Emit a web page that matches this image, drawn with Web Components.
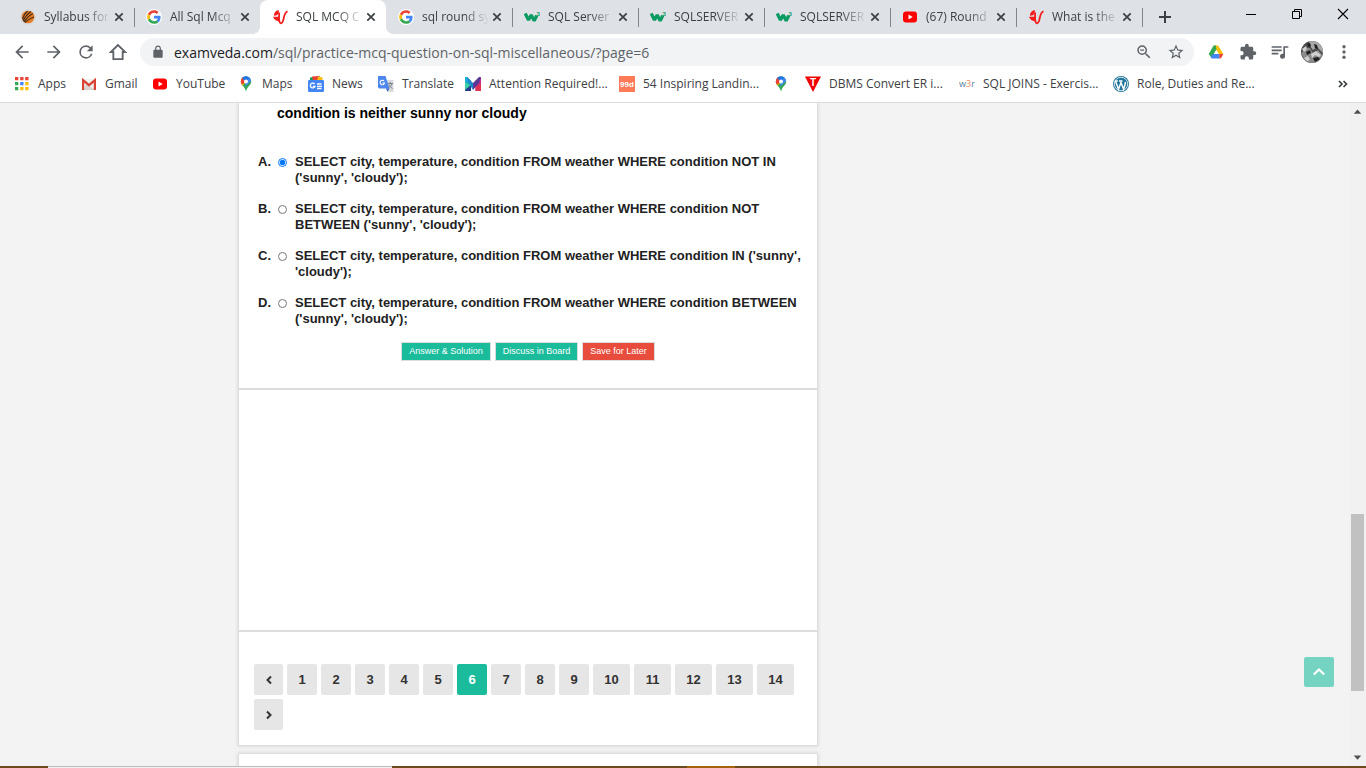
<!DOCTYPE html>
<html lang="en">
<head>
<meta charset="utf-8">
<title>SQL MCQ Questions</title>
<style>
html, body { height: 100%; margin: 0; }
body { overflow: hidden; font-family: "Open Sans", "Noto Sans", sans-serif; font-size: 12px; color: #3c4043; }
</style>
</head>
<body>
<browser-window></browser-window>
<script>
const icons = {
  back: ['0 0 24 24', '<path fill="currentColor" d="M20 11H7.83l5.59-5.59L12 4l-8 8 8 8 1.41-1.41L7.83 13H20z"/>'],
  forward: ['0 0 24 24', '<path fill="currentColor" d="M12 4l-1.41 1.41L16.17 11H4v2h12.17l-5.58 5.59L12 20l8-8z"/>'],
  reload: ['0 0 24 24', '<path fill="currentColor" d="M17.65 6.35A7.96 7.96 0 0 0 12 4a8 8 0 1 0 7.73 10h-2.08A6 6 0 1 1 12 6c1.66 0 3.14.69 4.22 1.78L13 11h7V4z"/>'],
  home: ['0 0 24 24', '<path fill="none" stroke="currentColor" stroke-width="2.2" d="M12 3.6 3.4 12H6.4v8.6h11.2V12h3z"/>'],
  lock: ['0 0 24 24', '<path fill="currentColor" d="M18 8h-1V6c0-2.76-2.24-5-5-5S7 3.24 7 6v2H6c-1.1 0-2 .9-2 2v10c0 1.1.9 2 2 2h12c1.1 0 2-.9 2-2V10c0-1.1-.9-2-2-2zM9 6c0-1.66 1.34-3 3-3s3 1.34 3 3v2H9z"/>'],
  zoom: ['0 0 24 24', '<path fill="currentColor" d="M15.5 14h-.79l-.28-.27A6.47 6.47 0 0 0 16 9.5 6.5 6.5 0 1 0 9.5 16c1.61 0 3.09-.59 4.23-1.57l.27.28v.79l5 4.99L20.49 19zm-6 0C7.01 14 5 11.99 5 9.5S7.01 5 9.5 5 14 7.01 14 9.5 11.99 14 9.5 14zM7 8.8h5v1.4H7z"/>'],
  star: ['0 0 24 24', '<path fill="currentColor" d="M22 9.24l-7.19-.62L12 2 9.19 8.63 2 9.24l5.46 4.73L5.82 21 12 17.27 18.18 21l-1.63-7.03zM12 15.4l-3.76 2.27 1-4.28-3.32-2.88 4.38-.38L12 6.1l1.71 4.04 4.38.38-3.32 2.88 1 4.28z"/>'],
  puzzle: ['0 0 24 24', '<path fill="currentColor" d="M20.5 11H19V7c0-1.1-.9-2-2-2h-4V3.5a2.5 2.5 0 0 0-5 0V5H4c-1.1 0-2 .9-2 2v3.8h1.5a2.7 2.7 0 0 1 0 5.4H2V20c0 1.1.9 2 2 2h3.8v-1.5a2.7 2.7 0 0 1 5.4 0V22H17c1.1 0 2-.9 2-2v-4h1.5a2.5 2.5 0 0 0 0-5z"/>'],
  queue: ['0 0 24 24', '<path fill="currentColor" d="M14 5H2v2h12zM14 9H2v2h12zM2 15h8v-2H2zM16 5v9.18c-.31-.11-.65-.18-1-.18a3 3 0 1 0 3 3V7h4V5z"/>'],
  dots: ['0 0 24 24', '<g fill="currentColor"><circle cx="12" cy="5" r="2.2"/><circle cx="12" cy="12" r="2.2"/><circle cx="12" cy="19" r="2.2"/></g>'],
  more: ['0 0 16 16', '<path fill="none" stroke="currentColor" stroke-width="1.7" d="M4 5l3 3-3 3M8.500 5l3 3-3 3"/>'],
  close: ['0 0 16 16', '<path stroke="currentColor" stroke-width="1.700" d="M4.300 4.300l7.400 7.400M11.700 4.300l-7.400 7.400"/>'],
  plus: ['0 0 16 16', '<path stroke="currentColor" stroke-width="2" d="M8 2v12M2 8h12"/>'],
  minimise: ['0 0 16 16', '<path stroke="currentColor" d="M3 8.500h10"/>'],
  restore: ['0 0 16 16', '<path fill="none" stroke="currentColor" d="M3.500 5.500h7v7h-7zM5.500 5.500v-2h7v7h-2"/>'],
  quit: ['0 0 16 16', '<path stroke="currentColor" stroke-width="1.100" d="M3 3l10 10M13 3L3 13"/>'],
  left: ['0 0 16 16', '<path fill="none" stroke="currentColor" stroke-width="2" d="M10 4.500L6.500 8l3.500 3.500"/>'],
  right: ['0 0 16 16', '<path fill="none" stroke="currentColor" stroke-width="2" d="M6 4.500L9.500 8 6 11.500"/>'],
  up: ['0 0 16 16', '<path fill="none" stroke="currentColor" stroke-width="2.200" d="M2.800 10.500L8 5.500l5.200 5"/>'],
  arrowUp: ['0 0 16 16', '<path fill="currentColor" d="M4.500 10L8 6l3.500 4z"/>'],
  arrowDown: ['0 0 16 16', '<path fill="currentColor" d="M4.500 6L8 10l3.500-4z"/>'],
  syllabus: ['0 0 16 16', '<circle cx="8" cy="8" r="7.700" fill="#d9d9d9"/><circle cx="8" cy="8" r="6.300" fill="#e87a22"/><g fill="none" stroke="#3d2a1c" stroke-width="1.100"><path d="M3 12C5 8 7 5 11 2.500M4 13C7 9 9 6 13 4.500M5 13.500C8 11 10 9 14 8M2.500 10C3.500 7 5 4 7.500 2"/></g>'],
  google: ['-4 -4 56 56', '<circle cx="24" cy="24" r="28" fill="#fff"/><path fill="#EA4335" d="M24 9.500c3.540 0 6.710 1.220 9.210 3.600l6.850-6.850C35.900 2.380 30.470 0 24 0 14.620 0 6.510 5.380 2.560 13.220l7.980 6.190C12.430 13.720 17.740 9.500 24 9.500z"/><path fill="#4285F4" d="M46.980 24.550c0-1.570-.15-3.090-.38-4.550H24v9.020h12.940c-.58 2.960-2.260 5.480-4.780 7.180l7.730 6c4.510-4.180 7.090-10.360 7.090-17.650z"/><path fill="#FBBC05" d="M10.530 28.590c-.48-1.450-.76-2.990-.76-4.590s.27-3.140.76-4.590l-7.980-6.190C.92 16.460 0 20.120 0 24s.92 7.540 2.560 10.780z"/><path fill="#34A853" d="M24 48c6.480 0 11.930-2.130 15.890-5.810l-7.730-6c-2.150 1.450-4.920 2.300-8.160 2.300-6.260 0-11.570-4.220-13.470-9.910l-7.980 6.190C6.510 42.620 14.620 48 24 48z"/>'],
  veda: ['0 0 16 16', '<path fill="#f51c1c" d="M6.800 1C3.500 1.500 2 4 1.900 6.800L5 6.200 6.800 4zM1 7.800h6v4.400C4 12 2 10.500 1 7.800z"/><path fill="none" stroke="#f51c1c" stroke-width="1.800" d="M7.200 3.500c-.2 4-.4 7 .2 9 .8 2.600 2.600 2.300 3.600-.5 1.200-3.500.8-8 4.500-9.800"/>'],
  schools: ['0 0 16 16', '<path fill="none" stroke="#0a9b63" stroke-width="3.300" stroke-linejoin="bevel" d="M1.200 4.500L4.500 11 7.200 6l3 5.700 2.600-5.200"/><text x="12.500" y="6.500" font-size="6" font-weight="700" font-family="Liberation Sans, sans-serif" fill="#0a9b63">3</text>'],
  youtube: ['0 0 16 16', '<rect x="1" y="2.500" width="14" height="11" rx="3" fill="#f00"/><path fill="#fff" d="M6.500 5.500v5L10.700 8z"/>'],
  apps: ['0 0 16 16', '<path fill="#ea4335" d="M1 1h3.300v3.300H1zM6.200 1h3.300v3.300H6.200zM11.200 1h3.300v3.300h-3.300z"/><path fill="#34a853" d="M1 6h3.300v3.300H1zM1 11h3.300v3.300H1z"/><path fill="#4285f4" d="M6.200 6h3.300v3.300H6.200z"/><path fill="#fbbc04" d="M11.200 6h3.300v3.300h-3.300zM6.200 11h3.300v3.300H6.200zM11.200 11h3.300v3.300h-3.300z"/>'],
  gmail: ['0 0 16 16', '<path fill="#f1f1f1" d="M1 3h14v11H1z"/><path fill="#d9d5d1" d="M5 8l3 2 7 4H3z"/><path fill="none" stroke="#d94334" stroke-width="2.200" d="M2.100 14V4.200L8 9.200l5.900-5V14"/>'],
  maps: ['0 0 16 16', '<clipPath id="pin"><path d="M8 .3a5.200 5.200 0 0 0-5.200 5.200c0 4 4 4.700 5.200 10.200 1.200-5.500 5.200-6.200 5.200-10.200A5.200 5.200 0 0 0 8 .3z"/></clipPath><g clip-path="url(#pin)"><path fill="#34a853" d="M0 0h16v16H0z"/><path fill="#fbbc04" d="M8 5.500L2 13V6l4-2z"/><path fill="#ea4335" d="M0 0h6l2 5.500L3.500 9 0 6z"/><path fill="#1a73e8" d="M4 2l4 3.500L13 0H4z"/><path fill="#4285f4" d="M8 5.500L12 1l2 3-7 7z"/></g><circle cx="8" cy="5.500" r="2" fill="#fff"/>'],
  news: ['0 0 16 16', '<path fill="#0c9d58" d="M2 1.500L12 .5v5H2z"/><path fill="#ea4335" d="M4 .5L11 0l1 5H5z"/><path fill="#fbbc04" d="M10 .5l4.500 1v4H9z"/><rect y="4" width="16" height="12" rx="1.200" fill="#4285f4"/><path fill="none" stroke="#fff" stroke-width="1.300" d="M6.600 8A2.400 2.400 0 1 0 7 10.300H4.800M9 8h4.500M9 10.300h5M9 12.500h4.500"/>'],
  translate: ['0 0 16 16', '<path fill="#d8dade" d="M6 4h9.500v12H9z"/><path fill="#4d87ee" d="M0 0h7.500l4 12.500H1.200L0 11.500z"/><path fill="#2b62c9" d="M8 12.500h3.500L9.500 15.500z"/><path fill="none" stroke="#fff" stroke-width="1.100" d="M6 5A2.200 2.200 0 1 0 6.500 7H4.400"/><path fill="none" stroke="#7b8490" d="M9.500 7.500H15M12.300 6v1.500M14 7.500c-.5 2-2 3.500-3.500 4.500M11 8.500c.7 1.800 2 3 3.500 4"/>'],
  attention: ['0 0 16 16', '<path fill="#273a8f" d="M0 1h2l4 4v10H0z"/><path fill="#18b3d8" d="M0 1h2l4 4v4L0 6z"/><path fill="#35d0a5" d="M0 6l6 3-6 5z"/><path fill="#1e88c9" d="M2 1l6 6v7L3 6z"/><path fill="#c02c91" d="M16 1v14h-5.500V5z"/><path fill="#583795" d="M14 1h2l-2 6-6 7V7z"/><path fill="#dd3354" d="M10.500 11L16 7v8h-5.500z"/>'],
  inspire: ['0 0 16 16', '<path fill="#ff7a59" d="M0 0h16v16H0z"/><text x="1" y="11" font-size="8" font-weight="700" font-family="Liberation Sans, sans-serif" fill="#fff">99d</text>'],
  dbms: ['0 0 16 16', '<path fill="#f00000" d="M0 .5h16L8 16z"/><text x="8" y="10" text-anchor="middle" font-size="10" font-weight="700" font-family="Liberation Sans, sans-serif" fill="#fff">T</text>'],
  w3r: ['0 0 16 16', '<text y="11" font-size="9" font-family="Open Sans, sans-serif" fill="#55819f">w<tspan fill="#e88b5c">3</tspan>r</text>'],
  wordpress: ['0 0 16 16', '<circle cx="8" cy="8" r="8" fill="#21759b"/><circle cx="8" cy="8" r="6.700" fill="none" stroke="#fff" stroke-width=".8"/><path fill="none" stroke="#fff" stroke-width="1.500" d="M2.500 5.200l3 8L8 6.500l2.600 6.700c1-3 2.200-5.200 1.600-7.200M1.800 5h3M6 5h3.500"/>'],
  drive: ['0 0 16 16', '<path fill="#fbbc04" d="M5.800 1.500h4.300L15.300 10h-4.500z"/><path fill="#34a853" d="M5.600 1.500h2.300L8.400 5.500 3.600 14 .7 10z"/><path fill="#fff" d="M8.200 6.200l2.400 4.200H5.800z"/><path fill="#4285f4" d="M4.600 10h7v4.500h-8L2.800 13z"/><path fill="#ea4335" d="M11.400 10h3.900l-2.300 4.300-1.600.2z"/>'],
  avatar: ['0 0 22 22', '<clipPath id="av"><circle cx="11" cy="11" r="11"/></clipPath><g clip-path="url(#av)"><path fill="#4b4b4b" d="M0 0h22v22H0z"/><path fill="#a8a8a8" d="M8 0l8-1 6 8v5l-6-6-4 3-3-4z"/><path fill="#8a8a8a" d="M0 12l8-6 4 6 5-3 5 6-8 7H5z"/><path fill="#d0d0d0" d="M10 13l5-3 5 4-2 2-4-2-3 3zM1 8l4-3 1 3-3 3zM3 17l4-2 2 4-3 1z"/><path fill="#1f1f1f" d="M13 3l3 1 1 4-3-1zM5 11l4-2 1 3-4 2zM12 17l5-1 2 2-5 3zM6 3l3-1 1 3-2 2z"/></g>'],
};

/* Base class: stamps the subclass's template into an open shadow root. */
class Part extends HTMLElement {
  connectedCallback() {
    if (this.shadowRoot) return;
    const t = document.createElement('template');
    t.innerHTML = `<style>*{box-sizing:border-box}button{font:inherit;color:inherit;background:none;border:0;padding:0;margin:0}a{color:inherit;text-decoration:none}${this.css()}</style>${this.html()}`;
    this.attachShadow({ mode: 'open' }).append(t.content.cloneNode(true));
  }
}
const define = (name, css, html) => customElements.define(name, class extends Part {
  css() { return css; }
  html() { return html(this); }
});
const ic = (name, size = 16) => `<ui-icon name="${name}" style="--size:${size}px"></ui-icon>`;

define('ui-icon', ':host{display:block;flex:none;width:var(--size,16px);height:var(--size,16px)}svg{display:block;width:100%;height:100%}',
  el => { const [box, body] = icons[el.getAttribute('name')]; return `<svg viewBox="${box}" aria-hidden="true">${body}</svg>`; });

define('browser-tab', `
  :host{display:flex;align-items:center;flex:0 1 126px;min-width:0;height:34px;position:relative}
  a{display:flex;align-items:center;gap:8px;flex:1;min-width:0;padding-left:12px}
  .title{flex:1;min-width:0;overflow:hidden;white-space:nowrap;line-height:18px;-webkit-mask-image:linear-gradient(90deg,#000 62%,transparent);mask-image:linear-gradient(90deg,#000 62%,transparent)}
  button{margin-right:7px}
  :host::after{content:"";width:1px;height:19px;margin-right:-1px;background:#80868b}
  :host([plain])::after{background:transparent}
  :host([active]){background:#fff;border-radius:8px 8px 0 0}
  :host([active])::before,:host([active])::after{content:"";position:absolute;bottom:0;width:8px;height:8px;margin:0}
  :host([active])::before{right:100%;background:radial-gradient(circle at 0 0,transparent 8px,#fff 8px)}
  :host([active])::after{left:100%;background:radial-gradient(circle at 100% 0,transparent 8px,#fff 8px)}`,
  el => `<a href="#">${ic(el.getAttribute('icon'))}<span class="title"><slot></slot></span></a><button aria-label="Close tab">${ic('close')}</button>`);

define('tab-strip', `
  :host{display:flex;height:34px;padding-left:8px;background:#dee1e6}
  .new{width:45px;display:grid;place-items:center}
  .controls{display:flex;margin-left:auto;height:28px;color:#000}
  .controls button{width:46px;display:grid;place-items:center}`,
  () => `
  <browser-tab icon="syllabus">Syllabus for</browser-tab>
  <browser-tab icon="google" plain>All Sql Mcq</browser-tab>
  <browser-tab icon="veda" active>SQL MCQ C</browser-tab>
  <browser-tab icon="google">sql round sy</browser-tab>
  <browser-tab icon="schools">SQL Server</browser-tab>
  <browser-tab icon="schools">SQLSERVER</browser-tab>
  <browser-tab icon="schools">SQLSERVER</browser-tab>
  <browser-tab icon="youtube">(67) Round</browser-tab>
  <browser-tab icon="veda">What is the</browser-tab>
  <button class="new" aria-label="New tab">${ic('plus')}</button>
  <div class="controls"><button aria-label="Minimise">${ic('minimise')}</button><button aria-label="Restore">${ic('restore')}</button><button aria-label="Close">${ic('quit')}</button></div>`);

define('tool-bar', `
  :host{display:flex;align-items:center;height:36px;padding:0 6px;background:#fff;color:#5f6368}
  button{width:32px;height:32px;display:grid;place-items:center;flex:none}
  .address{flex:1;min-width:0;display:flex;align-items:center;height:28px;margin:0 6px;padding:0 2px 0 11px;border-radius:14px;background:#f1f3f4;font-size:14px}
  label{color:#202124;margin-left:9px}
  input{flex:1;min-width:0;border:0;padding:0;margin:0;background:none;outline:0;font:inherit;color:#5f6368}`,
  () => `
  <button aria-label="Back">${ic('back', 20)}</button><button aria-label="Forward">${ic('forward', 20)}</button><button aria-label="Reload">${ic('reload', 20)}</button><button aria-label="Home">${ic('home', 20)}</button>
  <div class="address">${ic('lock', 14)}<label for="url">examveda.com</label><input id="url" value="/sql/practice-mcq-question-on-sql-miscellaneous/?page=6"><button aria-label="Zoom">${ic('zoom', 18)}</button><button aria-label="Bookmark">${ic('star', 18)}</button></div>
  <button aria-label="Drive">${ic('drive')}</button><button aria-label="Extensions">${ic('puzzle', 18)}</button><button aria-label="Media">${ic('queue', 20)}</button><button aria-label="Profile">${ic('avatar', 22)}</button><button aria-label="Menu">${ic('dots', 18)}</button>`);

define('bookmark-link', ':host{display:block;min-width:0}a{display:flex;align-items:center;gap:8px;min-height:18px;white-space:nowrap;line-height:18px}',
  el => `<a href="#">${ic(el.getAttribute('icon'))}<slot></slot></a>`);

define('bookmark-bar', `
  :host{display:flex;align-items:center;justify-content:space-between;height:33px;padding:0 15px 4px 14px;background:#fff;border-bottom:1px solid #d9dbde}
  nav{display:grid;grid-template-columns:67px 71px 86px 70px 70px 87px 154px 154px 32px 154px 154px auto}`,
  () => `<nav>
  <bookmark-link icon="apps">Apps</bookmark-link><bookmark-link icon="gmail">Gmail</bookmark-link><bookmark-link icon="youtube">YouTube</bookmark-link>
  <bookmark-link icon="maps">Maps</bookmark-link><bookmark-link icon="news">News</bookmark-link><bookmark-link icon="translate">Translate</bookmark-link>
  <bookmark-link icon="attention">Attention Required!...</bookmark-link><bookmark-link icon="inspire">54 Inspiring Landin...</bookmark-link><bookmark-link icon="maps"></bookmark-link>
  <bookmark-link icon="dbms">DBMS Convert ER i...</bookmark-link><bookmark-link icon="w3r">SQL JOINS - Exercis...</bookmark-link><bookmark-link icon="wordpress">Role, Duties and Re...</bookmark-link>
  </nav><button aria-label="More bookmarks">${ic('more')}</button>`);

const options = [
  "SELECT city, temperature, condition FROM weather WHERE condition NOT IN ('sunny', 'cloudy');",
  "SELECT city, temperature, condition FROM weather WHERE condition NOT BETWEEN ('sunny', 'cloudy');",
  "SELECT city, temperature, condition FROM weather WHERE condition IN ('sunny', 'cloudy');",
  "SELECT city, temperature, condition FROM weather WHERE condition BETWEEN ('sunny', 'cloudy');",
];
define('quiz-question', `
  :host{display:block;padding:0 8px 27px 19px;color:#222;font-weight:700;font-size:13px;line-height:16px}
  h2{margin:0 19px 32px;padding-top:1px;font-size:14px;line-height:18px;color:#000}
  .option{display:grid;grid-template-columns:20px 9px auto;margin-bottom:15px}
  input{width:9px;height:9px;margin:4px 0 0;accent-color:#0075ff}
  label{padding-left:8px}
  .actions{display:flex;justify-content:center;gap:4px;padding-right:11px}
  .actions button{height:19px;padding:0 7px 1px;border:1px solid #dcdcdc;background:#1abc9c;color:#fff;font-size:9px;line-height:16px;font-weight:400}
  .actions .save{background:#e74c3c}`,
  () => `<h2>condition is neither sunny nor cloudy</h2>
  ${options.map((t, i) => `<div class="option"><span>${'ABCD'[i]}.</span><input type="radio" name="answer" id="o${i}"${i ? '' : ' checked'}><label for="o${i}">${t}</label></div>`).join('')}
  <div class="actions"><button>Answer &amp; Solution</button><button>Discuss in Board</button><button class="save">Save for Later</button></div>`);

define('page-links', `
  :host{display:flex;flex-wrap:wrap;gap:4px;padding:32px 15px 15px;font-size:13px;font-weight:700;color:#333}
  a{display:grid;place-items:center;width:30px;height:31px;border-radius:2px;background:#e6e6e6}
  .step{width:29px}.wide{width:37px}
  .on{background:#1abc9c;color:#fff}`,
  () => `<a class="step" href="#" aria-label="Previous">${ic('left')}</a>
  ${Array.from({ length: 14 }, (_, i) => `<a href="#" class="${i > 8 ? 'wide' : ''}${i === 5 ? 'on' : ''}">${i + 1}</a>`).join('')}
  <a class="step" href="#" aria-label="Next">${ic('right')}</a>`);

define('scroll-track', `
  :host{display:flex;flex-direction:column;align-items:center;width:17px;flex:none;background:#f1f1f1;color:#505050}
  .thumb{flex:177;width:13px;background:#c1c1c1}
  .before{flex:394}.after{flex:58}`,
  () => `${ic('arrowUp', 17)}<div class="before"></div><div class="thumb"></div><div class="after"></div>${ic('arrowDown', 17)}`);

define('page-view', `
  :host{display:flex;flex:1;min-height:0;position:relative;overflow:hidden;background:#f3f3f3;font-family:"Liberation Sans",Arial,sans-serif}
  main{flex:1;min-width:0;padding-left:238px}
  .card{width:580px;background:#fff;border:1px solid #ddd;border-top:0;box-shadow:0 0 4px #0002}
  .card>*{border-bottom:2px solid #ddd}
  .card>:last-child{border-bottom:0}
  .blank{height:242px}
  .next{margin-top:7px;border-top:1px solid #ddd;height:60px}
  .top{position:absolute;right:32px;bottom:79px;width:30px;height:30px;border-radius:2px;background:#74d4c1;color:#fff;display:grid;place-items:center}`,
  () => `<main><section class="card"><quiz-question></quiz-question><div class="blank"></div><page-links></page-links></section><section class="card next"></section></main>
  <scroll-track></scroll-track><button class="top" aria-label="Back to top">${ic('up')}</button>`);

define('task-edge', `
  :host{display:flex;flex:none;height:2px;background:#6b4a1c}
  i{flex:none;height:2px}
  .preview{width:344px;margin-left:48px;background:#f2f2f2;border-top:1px solid #bbb}
  .alert{width:48px;margin-left:295px;background:#a5620e}`,
  () => '<i class="preview"></i><i class="alert"></i>');

define('browser-window', ':host{display:flex;flex-direction:column;height:100vh}',
  () => '<tab-strip></tab-strip><tool-bar></tool-bar><bookmark-bar></bookmark-bar><page-view></page-view><task-edge></task-edge>');
</script>
</body>
</html>
